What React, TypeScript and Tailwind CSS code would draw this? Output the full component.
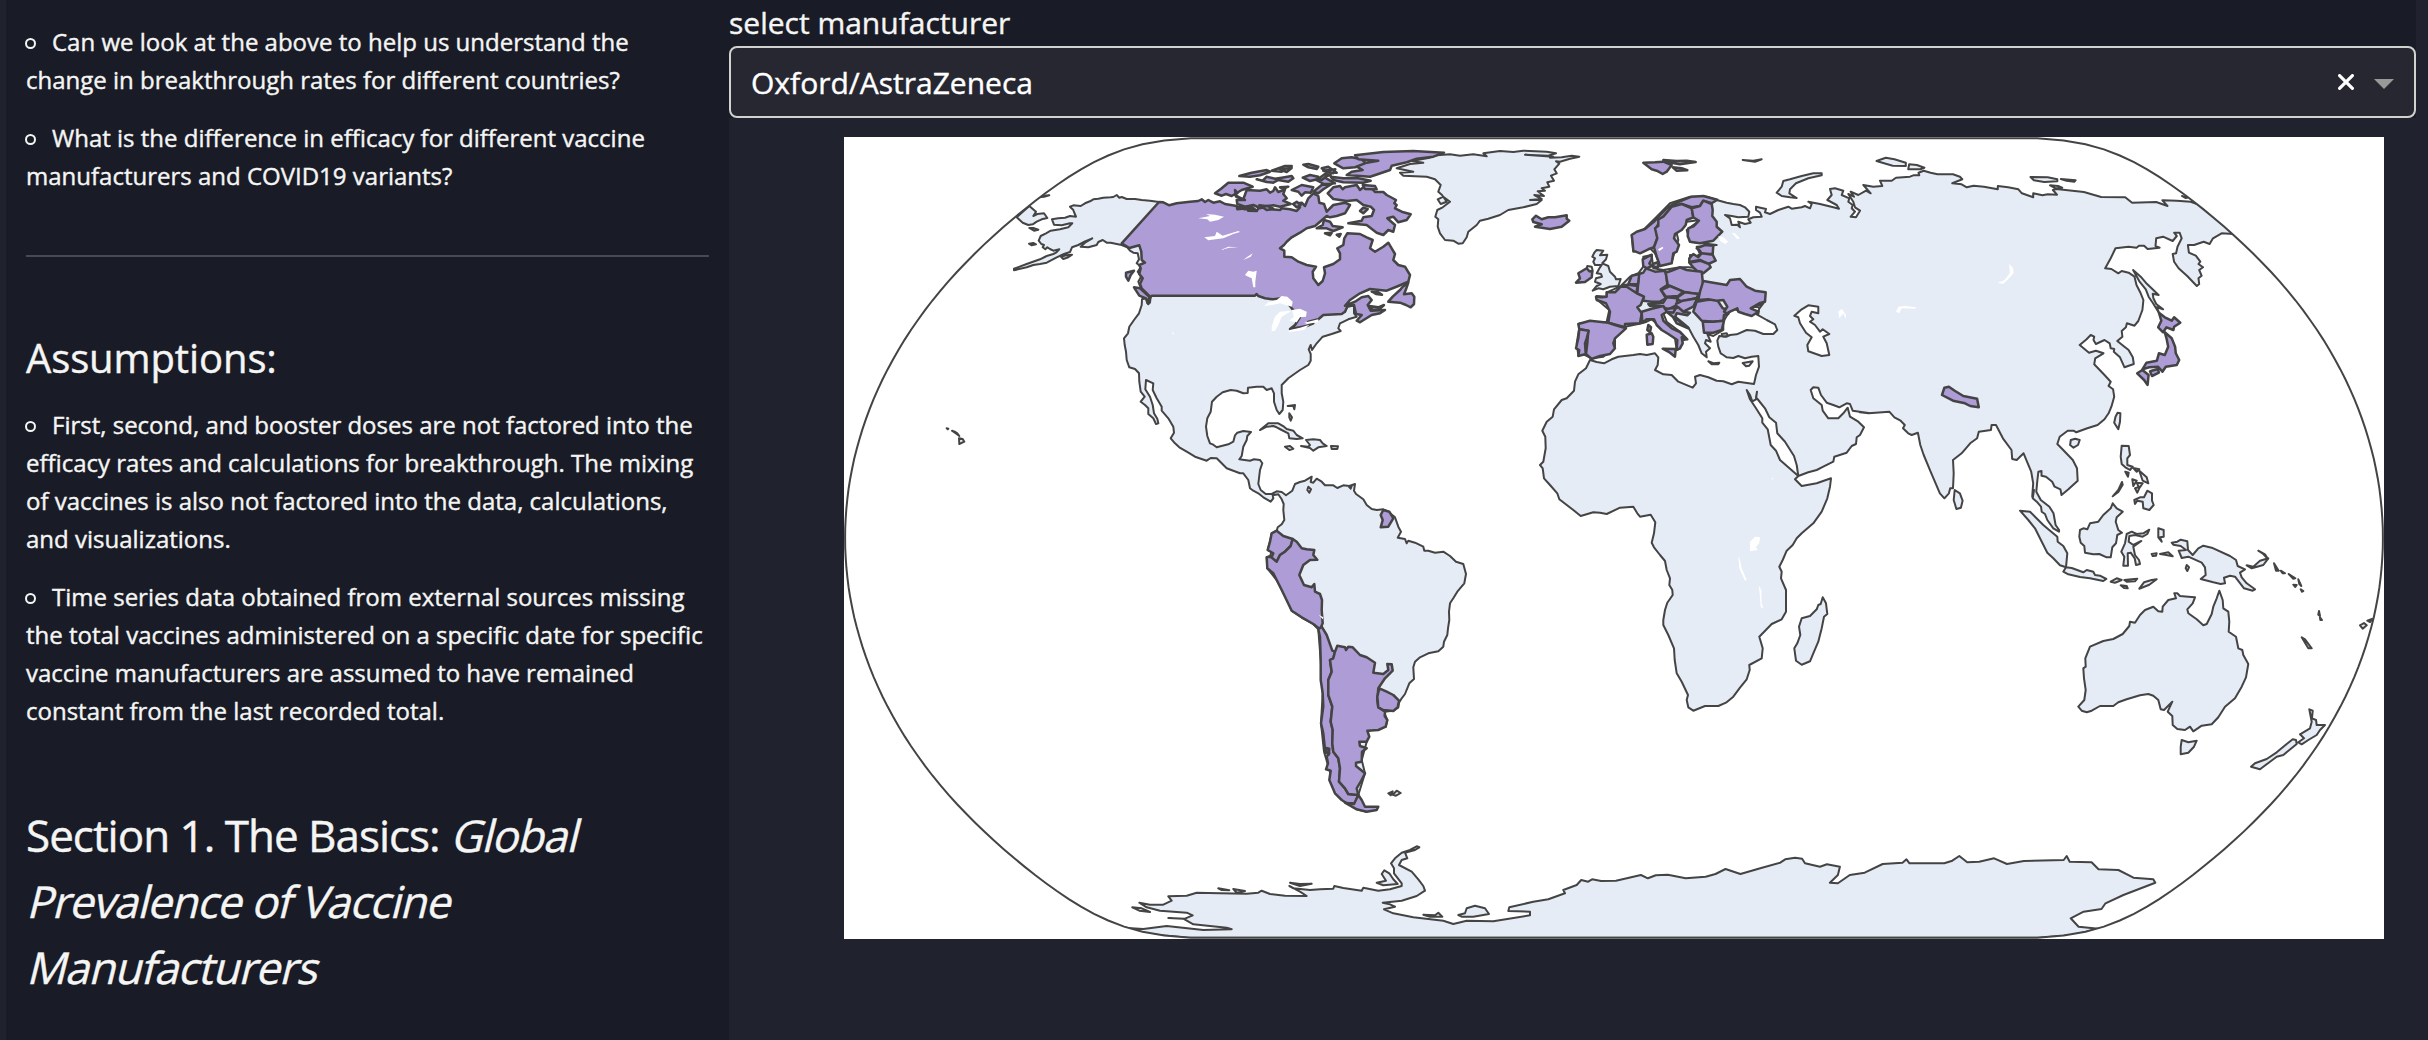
import React from "react";

/* ---------- map geometry ---------- */

// Each sheet holds the coastline points of one region: origin x, origin y, units per px across, units per px down.
const sheets: Record<string, [number, number, number, number]> = {
  A: [840, 130, 3, 3],
  B: [1100, 130, 3, 3],
  C: [1100, 460, 3, 3],
  E: [1500, 130, 3, 3],
  F: [1500, 340, 3, 3],
  G: [1860, 130, 2.9037, 3],
  H: [1940, 440, 3, 3],
  I: [840, 800, 1.00513, 3],
};

// "A:x,y x,y B:x,y ..." -> closed path; a letter switches the sheet.
function shape(src: string): string {
  let s = sheets.A;
  const pts: string[] = [];
  for (let tok of src.trim().split(/\s+/)) {
    if (tok[1] === ":") {
      s = sheets[tok[0]];
      tok = tok.slice(2);
    }
    const [x, y] = tok.split(",").map(Number);
    pts.push(`${(s[0] + x / s[2]).toFixed(1)} ${(s[1] + y / s[3]).toFixed(1)}`);
  }
  return "M" + pts.join("L") + "Z";
}

// Edge of the Natural Earth projection.
function globe(): string {
  const k = 281.1;
  const right: [number, number][] = [];
  for (let i = 0; i <= 90; i++) {
    const p = ((90 - i * 2) * Math.PI) / 180;
    const p2 = p * p;
    const p4 = p2 * p2;
    const x = Math.PI * (0.8707 - 0.131979 * p2 + p4 * (-0.013791 + p4 * (0.003971 * p2 - 0.001529 * p4)));
    const y = p * (1.007226 + p2 * (0.015085 + p4 * (-0.044475 + 0.028874 * p2 - 0.005916 * p4)));
    right.push([x * k, y * k]);
  }
  const all = [
    ...right.map(([x, y]) => [1614 + x, 538 - y]),
    ...right.slice().reverse().map(([x, y]) => [1614 - x, 538 - y]),
  ];
  return "M" + all.map(([x, y]) => `${x.toFixed(1)} ${y.toFixed(1)}`).join("L") + "Z";
}

const land = [
  // Americas
  `A:957,216 930,212 905,210 885,207 860,207 845,201 838,203 830,195 820,201 812,202 790,203 775,206 760,208 750,214 735,220 722,228 700,226 690,230 700,240 702,246 708,260 690,258 675,263 655,265 636,268 642,284 665,286 690,280 697,280 685,292 660,298 632,302 618,310 602,318 596,332 604,342 612,345 608,352 616,358 622,352 630,357 640,362 658,358 648,368 640,372 620,378 600,388 560,402 522,416 522,421 560,412 580,405 600,402 620,398 650,382 672,372 690,366 696,352 715,345 735,334 757,325 735,338 722,350 745,352 770,345 775,336 788,330 800,338 812,338 830,342 845,345 862,352 870,362 880,368 893,370 897,388 890,400 903,410 893,425 903,440 895,455 900,468 930,490 932,500 930,518 922,520 918,505 906,508 905,525 897,550 882,570 868,590 864,610 852,625 854,645 858,665 860,690 868,712 885,717 897,730 898,755 902,785 914,800 902,815 915,825 925,835 925,852 940,865 948,882 955,880 952,866 942,850 938,825 930,800 916,778 918,750 940,760 938,780 950,805 965,830 965,842 985,865 1000,890 1002,908 992,925 1005,940 1018,952 1040,965 1065,980 1100,992 1112,984 1130,985 1145,1000 1160,1015 1180,1022 1200,1030
  C:430,40 445,60 450,85 460,92 475,100 490,112 512,125 520,115 518,106 535,103 545,118 551,132 550,150 553,180 545,193 533,202 530,212 515,220 510,245 503,270 515,275 510,288 500,292 502,325 530,360 565,425 575,452 605,472 640,492 655,508 662,600 668,700 663,790 672,875 690,935 705,1000 770,1048 800,1055 775,1005 795,940 785,900 800,845 805,812 857,800 862,780 852,755 880,752 895,742 897,728 905,715 915,702 928,670 942,657 940,622 945,605 960,592 985,580 1015,574 1030,560 1032,545 1042,525 1044,505 1048,480 1047,455 1050,430 1060,415 1072,395 1093,370 1098,342 1090,312 1068,305 1050,288 1030,275 1005,278 985,272 973,272 970,260 945,248 925,242 920,250 915,237 893,233 903,215 895,200 885,172 865,155 850,148 830,150 815,147 800,135 790,118 768,102 762,92 765,72 748,78 730,76 712,84 700,76 675,76 665,65 650,56 640,68 632,66 635,50 615,62 600,66 585,72 577,92 558,106 545,96 530,94 515,102 497,102 482,90 475,72 480,30
  B:487,1000 480,990 462,988 450,992 418,988 425,978 430,950 440,930 442,918 453,906 430,903 412,908 405,916 400,935 385,943 350,952 340,944 330,940 322,918 318,890 322,865 332,845 336,815 350,800 368,787 392,780 410,782 430,790 443,789 444,773 470,770 490,770 500,780 515,775 522,790 522,815 530,840 538,852 548,840 550,815 545,790 545,765 565,745 600,720 625,705 632,692 632,672 626,658 632,645 636,660 650,640 668,620 695,612 722,603 715,595 720,580 745,568 770,560 762,550 762,527 742,527 735,545 690,535 600,500 460,470 180,470 200,300 177,216`,
  // Greenland
  `B:890,115 930,102 970,98 935,93 985,84 1010,76 1050,73 1080,77 1120,73 1160,79 1150,70 1200,63 1240,66 1270,62 1340,65 1368,70 1345,77 1275,74 1360,80 1350,83 1385,82 1415,77 1438,80 1410,86 1380,95 1368,94 1378,101 1363,118 1370,130 1353,137 1362,152 1342,157 1348,170 1325,175 1335,182 1313,184 1332,198 1303,195 1325,207 1290,210 1325,210 1310,222 1270,232 1225,240 1200,255 1165,266 1140,272 1130,285 1105,305 1100,322 1088,340 1075,341 1060,332 1035,330 1020,310 1013,290 1015,268 1006,260 1012,240 1028,232 1050,215 1030,200 1013,208 1022,222 1040,215 1026,195 1015,185 1022,165 1005,148 980,140 910,137 900,128 940,125`,
  // Eurasia and Africa
  `E:650,210 680,218 700,222 720,225 735,232 748,245 745,260 715,262 695,258 675,255 690,265 695,285 712,284 720,292 715,275 735,282 752,278 745,268 760,262 785,260 780,248 768,240 768,230 798,237 795,247 810,252 835,240 865,230 875,236 905,232 915,228 930,235 935,222 925,215 960,222 1000,232 1017,236 1010,225 982,210 995,195 990,177 1005,175 1030,182 1025,195 1048,205 1045,215 1058,225 1055,235 1065,245 1052,260 1068,262 1080,242 1065,232 1060,215 1045,192 1062,200 1052,185 1075,195 1098,182 1112,190 1090,165 1120,170 1147,168 1140,152 1175,152 1188,143 1230,140 1240,136 1258,136
  G:172,136 170,128 185,122 205,128 225,133 270,133 290,140 297,148 268,160 295,163 310,172 330,167 360,170 400,178 400,168 430,172 460,178 470,190 503,202 503,190 530,196 545,193 572,194 560,180 570,177 650,186 700,201 770,202 790,218 860,216 893,228 878,211 920,212 960,215 985,224 1085,312 1050,310 1025,325 1015,342 998,335 985,340 970,345 952,345 955,368 975,377 988,395 983,402 996,412 985,420 992,437 983,445 985,462 978,468 950,438 925,415 912,395 908,372 918,370 922,350 934,325 928,308 912,308 920,318 908,333 880,320 860,325 858,348 870,353 835,357 825,347 810,347 803,353 780,350 742,355 728,385 712,415 730,417 750,430 760,423 780,428 797,440 803,465 815,490 823,510 820,540 808,573 797,587 775,580 772,592 760,603 762,620 747,633 765,648 780,660 792,682 795,702 768,712 755,682 737,665 738,657 728,655 725,640 710,630 685,642 678,630 680,620 670,615 658,628 638,645 665,668 685,662 707,670 683,685 680,703 710,735 728,755 722,768 735,778 738,800 730,830 722,850 710,868 690,885 660,895 628,907 620,902 603,902 580,920 573,942 590,960 618,990 630,1015 632,1052 605,1078 585,1095 582,1078 565,1070 558,1055 540,1040 527,1037 527,1023 518,1025 515,1050 512,1085 525,1110 550,1130 562,1150 568,1185 578,1200
  H:357,275 340,265 322,240 315,222 305,215 303,200 290,185 278,175 282,150 G:500,1100 503,1060 497,1025 485,995 475,970 455,990 442,987 440,960 415,925 395,885 382,885 380,900 345,905 340,925 320,940 295,970 270,990 272,1030 270,1075 262,1075 258,1090 245,1105 232,1090 205,1025 185,975 175,945 168,908 150,915 140,910 125,895 130,885 118,872 100,862 85,845 25,850 0,847
  F:1110,220 1058,212 1050,192 1040,190 1018,202 1000,195 980,188 963,165 955,143 940,142 932,150 940,175 965,195 968,212 985,235 1015,235 1030,220 1043,203 1050,230 1075,245 1092,262 1080,285 1070,292 1068,312 1055,318 1040,338 1003,350 1000,365 970,380 950,390 925,397 895,408 890,375 882,348 855,305 832,280 828,248 808,232 795,205 775,180 768,172 771,155 768,178 757,184 750,165 740,150 750,178 768,205 787,235 787,248 803,268 812,315 828,332 840,360 865,382 895,408 885,418 905,438 950,430 993,415 990,440 982,475 965,515 940,550 905,580 890,595 878,615 860,632 848,660 838,680 845,695 843,715 858,750 858,815 845,838 815,852 778,890 788,925 785,955 748,975 749,990 740,1018 720,1043 700,1070 678,1088 655,1098 615,1098 580,1112 565,1102 560,1080 564,1065 545,1025 530,1000 524,960 522,925 505,885 490,855 490,840 495,810 502,788 518,765 517,750 508,735 510,715 500,690 495,663 480,645 462,622 455,608 462,580 466,547 452,524 420,530 412,520 400,500 360,503 320,522 300,518 280,517 242,528 220,510 178,478 172,460 150,435 132,415 128,385 120,375 130,365 137,325 136,290 127,272 140,245 158,230 162,208 185,180 200,175 222,152 225,125 235,103 258,85 270,60 290,66 312,70 335,58 355,50 400,45 420,42 440,45 465,40 475,52 473,75 465,90 490,103 515,105 535,125 578,143 588,130 585,110 600,105 625,112 650,122 670,124 695,133 715,125 762,132 768,105 777,80 775,48 755,50 735,55 715,48 700,54 680,52 670,45
  E:662,670 655,650 652,632 658,618 680,620 690,615 710,613 740,600 765,602 790,612 820,612 832,600 825,583 800,570 770,553 775,540 790,520 720,545 700,535 685,550 670,575 670,600 640,618 622,612 632,635 618,630 615,640 630,655 618,665 620,682 605,670 595,645 580,620 565,592 545,575 520,555 500,545 490,550 500,575 540,605 560,628 545,632 540,655 530,660 525,625 480,590 455,568 440,575 425,580 375,590 345,625 345,650 310,680 275,685 255,675 235,675 230,640 240,580 320,575 328,540 290,508 290,498 320,500 320,487 360,470 390,440 415,430 430,410 430,380 455,375 460,415 490,420 540,412 565,412 600,415 570,400 570,375 590,378 600,372 590,350 650,345 570,335 560,300 600,270 560,275 530,310 535,330 515,395 480,405 465,370 450,355 400,365 395,315 430,300 470,260 510,220 570,200 620,200`,
  // Great Britain and Northern Ireland
  `E:283,368 290,360 310,362 300,376 322,374 318,388 307,400 325,408 330,425 345,440 348,448 362,447 355,468 330,470 310,478 295,475 278,482 290,468 302,462 285,455 288,445 306,440 303,432 290,430 300,412 305,405 285,405 280,395 285,385 277,380`,
  `E:262,408 275,410 278,422 268,424 260,416`,
  // Arctic islands
  `E:965,130 940,130 905,138 870,148 850,153 845,170 830,188 845,198 870,202 890,204 868,190 870,178 888,160 925,145 965,136`,
  `E:728,90 760,92 785,88 765,95`, `G:48,93 75,83 100,88 133,98 133,108 95,107 70,100`, `G:143,103 165,105 187,113 175,118 140,118`,
  `G:495,141 545,142 573,148 573,154 535,156 505,151`, `G:583,147 626,151 622,155 600,152`, `G:552,166 575,168 587,173 568,175`, `G:935,198 950,203 945,204`,
  // Chukotka past the date line, Bering islands
  `A:568,228 588,245 580,258 592,252 612,250 622,264 605,268 590,275 578,283 565,285 548,278 530,262`,
  `A:598,202 610,197 628,196 612,200`, `A:568,294 580,294 595,299 582,302`, `A:567,341 580,339 588,343 575,346`, `A:663,380 678,376 696,374 685,382 670,387`,
  // Hawaii
  `A:357,925 368,927 373,935 358,942`, `A:336,902 344,905 352,910 358,918 350,912`, `A:320,895 325,896 323,898`,
  // Caribbean
  `B:480,900 505,880 535,880 552,890 560,897 580,902 590,915 608,925 590,927 568,925 565,910 545,900 530,892 520,888 500,890`,
  `B:603,948 625,950 630,945 618,930 640,928 660,930 668,940 680,948 655,952 640,962 630,954`, `B:555,950 570,948 580,956 568,960`, `B:693,948 714,949 712,957 695,957`,
  `B:563,828 585,825 583,838 580,828`, `B:568,850 576,862 572,872 568,862`,
  `C:625,80 633,88 628,98 622,90`, `C:745,78 755,78 752,86`, `C:865,1000 878,994 872,1006`, `C:878,1004 890,992 902,999 888,1007`,
  // Mediterranean islands
  `E:625,694 640,700 658,698 655,703 635,703`, `E:728,699 758,694 748,707 738,709`, `E:665,612 680,610 684,618 668,620`,
  // Indian Ocean
  `F:968,772 978,790 982,822 972,830 965,865 955,905 940,940 930,964 905,974 888,962 883,925 892,910 901,885 897,860 905,835 930,828 950,808 955,795 962,792`,
  `G:275,1080 290,1090 298,1112 293,1133 280,1137 272,1110`,
  // East Asia islands
  `G:748,848 756,850 755,875 750,898 738,878 742,860`, `G:612,930 625,926 638,930 633,945 620,953 610,945`,
  `G:793,420 815,440 830,458 867,495 850,491 852,505 860,522 880,538 862,532 868,548 850,518 838,500 830,478 812,455`,
  // Philippines
  `H:545,17 566,18 570,45 562,55 562,75 578,80 570,90 556,82 545,72 542,50`, `H:580,84 598,88 590,95`, `H:556,95 566,98 564,110`, `H:577,118 590,122 580,138`, `H:598,92 620,112 625,130 608,122`, `H:590,128 608,130 598,145`, `H:585,145 600,140 592,158`,
  `H:600,172 612,172 622,152 636,160 636,182 641,195 628,210 610,205 608,185 592,182 585,192 583,180`, `H:518,169 535,150 546,126 548,134 535,156`,
  // Indonesia
  `H:240,212 270,215 285,230 310,255 325,268 352,290 353,305 370,318 382,340 378,382 360,376 340,355 322,338 300,295 285,265 265,240`,
  `H:370,395 378,382 395,384 430,397 440,390 460,395 465,405 480,407 499,417 490,423 450,415 420,411 385,403`,
  `H:512,425 530,415 545,420 525,428`, `H:553,420 575,418 592,416 585,424 560,425`, `H:542,436 560,438 563,445 552,444`, `H:598,446 612,427 635,420 650,418 628,434`,
  `H:420,270 430,265 442,268 450,250 475,245 490,225 512,205 518,190 530,205 548,215 530,232 527,245 535,270 546,278 532,285 528,310 517,322 512,352 500,352 478,342 460,343 435,338 433,318 422,308 418,290`,
  `H:628,269 622,282 608,290 585,285 568,288 566,305 580,315 604,303 580,320 585,345 597,360 600,372 588,375 584,355 572,338 563,340 564,377 550,377 553,350 544,335 555,310 560,282 575,275 590,282 610,280`,
  `H:655,265 671,270 671,290 660,292 665,305 655,292`, `H:635,342 650,340 648,347 638,348`, `H:660,342 685,337 698,349 675,344`, `H:740,375 747,382 742,393 737,385`,
  // New Guinea and Melanesia
  `H:695,308 712,305 722,299 742,304 744,330 758,345 775,325 790,317 815,323 870,348 888,360 893,378 915,388 900,398 905,412 920,430 945,448 938,452 912,445 885,410 870,407 852,413 855,430 842,432 820,427 782,417 797,405 795,382 785,368 745,350 725,354 716,332 738,330 722,318 700,314`,
  `H:920,376 940,380 960,362 985,355 970,375 935,385`, `H:955,332 975,343 984,357 970,342`, `H:1002,370 1016,392 1008,392`, `H:1022,392 1035,400 1028,400`, `H:1046,402 1066,415 1060,416`, `H:1075,418 1084,438 1078,432`, `H:1060,434 1070,435 1066,441`, `H:1082,448 1090,453 1086,455`, `H:1137,513 1140,528 1135,524`, `H:1140,532 1146,540 1141,540`, `H:1085,592 1095,598 1115,625 1105,625`, `H:1260,556 1272,549 1280,556 1268,566`, `H:1282,542 1298,536 1290,546`,
  // Australia, Tasmania, New Zealand
  `H:703,460 712,460 720,468 745,470 765,472 758,490 742,508 745,520 770,538 790,556 800,552 815,522 820,500 830,475 838,452 848,480 850,505 865,515 868,545 866,575 888,590 895,625 907,630 910,645 925,672 918,712 905,740 885,775 855,800 835,832 815,853 785,857 760,874 750,860 735,870 712,867 698,855 697,828 683,815 697,785 672,810 662,808 655,780 640,767 625,762 600,766 560,778 535,787 520,798 480,798 455,812 440,817 425,812 415,800 433,780 437,750 432,715 430,685 437,680 436,655 450,620 490,603 520,597 548,582 568,558 570,545 585,548 600,525 615,510 640,500 655,514 667,515 668,500 685,480 708,475`,
  `H:725,900 745,907 770,902 762,920 745,938 722,943 722,920`,
  `H:1108,808 1118,812 1116,835 1128,840 1130,855 1155,855 1140,870 1130,885 1105,900 1085,913 1075,907 1092,895 1080,883 1110,865 1115,845`,
  `H:1058,898 1068,900 1070,912 1030,945 1010,950 990,965 960,988 933,980 945,970 980,957 1010,937 1040,912`,
  // Antarctica
  `C:82,1404 130,1407 200,1398 310,1410 395,1408 380,1403 280,1393 250,1376 205,1374 255,1376 278,1366 260,1358 180,1352 140,1342 118,1328 150,1334 190,1334 215,1322 205,1309 260,1307 290,1298 360,1300 440,1301 475,1298 485,1292 510,1302 555,1307 620,1308 600,1295 568,1278 580,1285 630,1290 660,1288 700,1286 703,1278 730,1284 785,1292 790,1283 835,1292 870,1288 905,1278 905,1270 882,1240 882,1225 873,1210 885,1195 905,1178 930,1170 950,1159 958,1162 945,1170 915,1178 922,1195 905,1200 897,1215 935,1235 955,1258 970,1278 975,1292 950,1308 905,1322 848,1328 870,1333 885,1340 852,1348 880,1360 940,1372 1030,1382 1060,1392 1100,1382 1180,1384 1290,1366 1290,1355 1225,1353 1228,1342 1300,1325 1345,1318 1395,1300 1390,1290 1430,1275
  I:745,240 752,245 756,238 765,243 780,242 805,225 812,235 820,226 832,224 850,235 870,230 880,222 890,207 905,222 925,205 945,188 950,178 960,173 967,176 970,190 985,200 992,193 1005,200 1003,225 995,248 1003,250 1015,225 1030,218 1048,192 1068,188 1072,178 1075,190 1110,190 1118,182 1125,168 1133,187 1145,185 1160,175 1173,192 1190,183 1230,180 1233,168 1236,185 1258,187 1265,208 1285,210 1300,233 1320,238 1322,248 1290,285 1272,310 1268,327 1250,335 1237,355 1245,380 1265,386 1240,405 1205,413 350,413 310,402 285,382`,
  `C:97,1342 125,1345 150,1356 118,1352`, `C:355,1285 388,1291 365,1290`, `C:400,1287 435,1293 410,1298`, `C:570,1268 600,1272 635,1271 600,1278`,
  `C:830,1268 858,1262 845,1242 853,1231 868,1240 880,1258 893,1272 850,1276`, `C:1075,1365 1095,1360 1100,1345 1125,1337 1155,1345 1167,1362 1120,1370 1085,1370`, `C:970,1364 1005,1366 1015,1358 1027,1370 990,1370`,
];

const seas = [
  `E:883,557 905,538 925,526 955,530 955,550 935,545 930,558 940,568 930,575 945,585 960,605 968,598 988,612 970,620 980,640 988,675 965,678 925,664 922,645 935,622 918,608 900,580 895,562`,
  `E:722,545 745,540 755,530 778,532 775,552 755,547 735,552`,
];

const sold = [
  // Canada
  `B:177,216 190,217 208,226 230,220 270,215 295,213 305,208 315,216 325,210 340,218 360,214 375,222 410,228 412,238 440,235 445,242 470,243 475,235 500,232 510,238 540,240 545,235 570,238 590,243 600,232 580,222 605,218 615,228 625,205 640,190 655,198 658,218 672,222 680,245 700,225 735,218 750,225 735,250 710,258 690,262 680,258 660,275 645,288 620,295 600,308 575,322 560,335 552,345 540,355 553,362 553,380 575,382 595,395 620,405 648,410 638,425 640,445 655,465 668,453 675,430 672,412 700,402 720,388 720,370 712,355 730,345 733,325 742,310 780,312 800,322 818,330 810,355 825,365 850,350 865,338 875,355 885,372 880,390 895,405 915,410 930,435 925,455 895,468 860,482 810,477 780,490 750,510 735,527 765,515 785,502 805,498 815,510 803,525 812,542 855,540 840,550 815,555 780,577 770,572 785,555 768,552 762,525 742,530 735,545 725,552 670,555 655,568 625,575 640,580 620,588 600,592 570,597 585,585 600,562 575,535 560,515 545,505 520,508 495,505 475,498 470,492 465,497 155,497 145,510 148,498 125,475 120,462 128,445 118,432 122,415 118,405 135,398 125,390 124,365 118,346 88,354 65,340`,
  `B:808,528 818,540 838,538 852,525 835,532`, `B:815,485 835,487 846,494 828,492`,
  `B:925,458 908,470 900,480 878,500 865,515 900,518 918,525 932,532 942,522 943,500 935,490 912,493 918,478`,
  `B:102,472 120,475 148,500 145,522 138,505 118,497`, `B:78,428 102,422 92,435 85,452 78,440`,
  `B:345,190 365,175 385,158 430,158 458,170 425,180 395,198 378,192 365,197`,
  `B:405,180 412,190 405,195 430,208 440,180 480,182 500,178 510,188 520,183 525,172 535,186 555,178 550,192 560,205 550,212 572,222 540,230 520,226 500,228 480,234 460,225 435,230 412,222 410,210 435,210 408,200`,
  `B:418,138 455,128 500,120 510,125 480,136 450,140`, `B:470,148 488,152 500,140 525,146 545,143 575,138 580,145 565,155 535,150 520,158 500,156`, `B:515,122 555,108 575,108 570,115 545,125`, `B:540,118 575,114 560,126`,
  `B:610,104 625,102 655,110 650,117 625,112`, `B:608,143 630,135 655,140 652,148 630,153`, `B:575,180 605,165 640,172 632,188 615,187 605,197 595,185`, `B:640,185 665,165 695,162 670,178 655,190`, `B:648,150 675,143 705,160 672,162`, `B:665,115 685,110 710,128 680,127`, `B:540,172 565,170 550,177`,
  `B:655,146 665,150 680,138 692,135 675,132`, `B:670,122 690,120 706,118 700,130`, `B:580,222 590,215 602,225 590,232`, `B:478,226 500,240 520,236 505,229`, `B:415,232 435,238 450,236 470,242 455,230`,
  `B:703,100 725,85 755,82 785,88 800,102 765,112 730,115`,
  `B:765,76 850,66 940,63 1032,68 1000,80 950,86 920,97 875,107 870,120 835,132 810,140 740,135 755,125 788,120 770,110 800,98 835,92 775,88`,
  `B:692,140 730,145 775,145 812,152 790,158 730,157 700,150`,
  `B:683,190 700,172 720,168 728,178 735,172 770,165 780,180 790,172 815,175 825,186 850,186 860,195 888,210 883,220 890,225 885,235 905,245 932,253 920,270 895,277 880,260 862,265 885,285 880,305 865,300 850,315 830,308 800,285 745,280 785,272 790,262 815,258 822,240 812,230 790,225 770,210 740,213 700,207`,
  `B:788,165 825,168 830,178 795,177`, `B:650,295 668,285 672,270 690,275 698,288 728,292 700,303 680,295`, `B:780,243 790,233 803,237 790,250`, `B:675,310 695,308 690,316`, `B:710,314 722,312 718,320`,
  // South America
  `C:530,212 550,228 578,237 572,258 555,275 540,285 530,305 512,298 520,280 503,270 510,245 515,220`,
  `C:578,237 590,245 605,265 620,268 643,270 640,285 652,299 630,300 610,315 598,345 612,375 635,382 643,372 645,395 660,402 666,420 665,450 668,490 660,508 640,492 605,472 575,452 545,390 520,340 502,325 500,292 512,290 530,305 540,285 555,275 572,258`,
  `C:655,508 665,500 680,525 697,572 705,575 700,595 690,600 695,635 685,660 685,705 697,740 692,785 698,810 697,850 700,875 715,895 720,925 717,965 735,985 745,1002 775,1005 765,1030 740,1030 725,1020 705,1000 688,960 692,932 678,928 684,910 680,890 688,880 676,878 670,820 663,790 670,740 668,700 662,660 662,600 660,530`,
  `C:705,575 712,557 735,562 738,570 745,560 758,562 780,585 800,592 825,608 820,638 850,642 865,630 862,612 875,613 878,632 855,655 835,685 832,720 835,742 855,755 854,768 862,780 857,800 835,810 802,812 808,830 800,845 778,845 780,858 800,865 786,875 785,905 768,908 768,918 795,940 782,965 770,985 775,1005 745,1002 735,985 717,965 720,925 715,895 700,875 697,850 698,810 692,785 697,740 685,705 685,660 695,635 690,600 700,595`,
  `C:838,685 860,695 880,705 897,722 893,742 880,753 850,750 835,742 832,710`,
  `C:850,150 868,155 880,175 865,200 842,202 848,180 842,165`,
  `C:775,1005 785,1020 795,1040 812,1040 835,1040 830,1050 800,1055 770,1048 735,1028 762,1032`, `C:678,864 688,866 686,884 680,878`,
  // Iceland, Svalbard, Ireland
  `B:1297,268 1308,257 1325,268 1345,262 1365,262 1400,256 1400,266 1408,272 1385,290 1350,297 1305,290 1325,283 1300,276`,
  `E:430,98 465,97 490,95 515,105 500,125 488,132 470,122 455,118`, `E:490,90 530,93 560,92 587,96 540,103 505,97`, `E:518,112 545,115 562,121 530,122`,
  `E:228,458 240,445 235,430 260,415 268,424 277,425 275,442 255,456`,
  // Nordics and Baltics
  `E:395,315 410,305 435,297 465,272 480,255 500,235 520,222 545,212 575,200 610,198 652,209 635,220 610,212 600,228 575,232 545,222 515,230 490,260 470,290 472,325 462,352 445,358 420,370 400,362 398,340`,
  `E:515,230 545,222 575,235 580,262 560,270 557,285 545,300 525,312 522,325 537,345 530,365 520,370 515,400 480,408 470,380 462,352 472,325 465,295 475,288 475,268 490,260`,
  `E:575,235 600,228 610,212 635,222 638,240 637,258 650,275 650,290 667,305 640,332 600,340 570,335 563,318 565,295 582,288 597,272 580,262`,
  `E:590,355 615,345 640,347 638,372 605,372 600,362`, `E:568,385 580,372 595,382 605,370 638,374 647,392 625,402 600,390 568,396`, `E:568,398 600,392 627,402 632,412 610,430 590,422 580,412`,
  `E:428,388 455,374 455,388 448,400 455,408 440,415 430,408`, `E:458,402 475,396 474,412 462,412`,
  // Central Europe
  `E:415,432 430,428 438,415 465,425 495,422 500,440 502,465 482,478 498,505 480,515 455,515 430,512 430,500 412,490 415,455`,
  `E:388,455 395,437 418,432 414,462 385,463`, `E:368,466 385,464 412,468 410,488 385,480`,
  `E:497,428 520,420 540,412 560,420 605,425 610,470 598,492 575,490 550,485 515,470 503,465`,
  `E:483,480 510,468 550,485 535,498 498,500`, `E:445,522 490,518 500,502 532,505 530,525 505,538 480,528 450,528`, `E:535,500 555,487 595,492 590,504 545,514 532,508`, `E:528,522 548,512 592,505 580,530 550,545 532,536`,
  `E:288,500 305,502 320,500 320,487 345,487 362,470 380,470 410,490 432,500 422,525 412,532 425,550 420,580 375,582 375,592 325,578 330,545 318,520 290,510`,
  `E:235,582 270,572 325,578 345,585 378,595 345,625 340,640 345,655 330,672 300,678 275,687 258,672 262,640 265,602 238,598`,
  `E:238,598 266,602 260,625 255,640 257,672 235,678 238,660 228,655 235,625`,
  `E:425,545 455,536 490,528 500,545 485,555 490,572 515,595 540,606 562,628 545,622 548,640 540,655 530,660 532,630 505,612 485,600 470,585 462,568 440,568 427,578`,
  `E:488,656 527,657 525,680 510,668`, `E:440,614 455,610 460,620 458,642 442,644`, `E:445,585 453,592 450,607 442,600`,
  `E:500,545 520,537 535,532 550,545 570,548 562,556 530,550 525,562 545,580 565,595 530,580 518,560`, `E:498,537 528,533 520,548 500,545`,
  `E:590,515 620,510 650,508 668,535 688,540 685,552 672,555 670,572 640,575 605,572 580,545`,
  `E:608,575 640,575 672,572 665,600 640,608 612,608`,
  `E:610,453 640,458 680,465 690,450 720,447 740,470 765,482 797,487 795,515 778,520 752,535 775,545 755,558 735,552 715,545 712,535 690,545 680,550 672,545 682,530 670,510 650,512 625,508 595,510 600,485`,
  // Nepal, Japan
  `G:238,795 245,773 258,770 275,782 300,798 340,806 345,832 320,828 305,820 270,812`,
  `G:868,548 885,562 905,572 912,562 930,578 912,590 910,600 890,592 880,607 866,592 875,572`,
  `G:885,607 905,625 915,650 917,670 927,690 920,705 888,710 878,725 865,710 840,712 820,718 832,698 862,692 868,670 885,675 895,650 890,625`,
  `G:805,730 820,720 838,735 835,765 825,750`, `G:842,724 865,717 868,728 848,738`,
];

const lakes = [
  `B:295,265 330,258 318,252 345,254 372,260 355,270 330,275 322,268`, `B:313,322 345,318 350,305 368,317 415,303 420,306 400,312 370,325 325,331`, `B:362,360 385,350 415,352 388,353`, `B:430,390 440,382 458,370 452,380`, `B:435,435 445,422 460,425 470,422 466,455 466,472 460,472 455,445 440,438`,
  `B:492,528 505,517 530,510 545,498 562,500 578,515 575,530 540,520 520,524`, `B:515,604 515,590 525,560 540,545 575,542 545,560 535,585 525,602`, `B:575,540 600,536 620,545 618,560 600,562 590,577 568,572 582,560`, `B:565,607 570,600 600,593 628,584 612,600`, `B:613,578 655,568 655,576 622,582`, `B:215,606 222,610 220,615`,
  `F:750,605 765,590 780,592 778,608 768,622 773,630 750,634`, `F:715,648 720,660 725,685 740,720 735,722 718,685`, `F:776,736 784,750 785,790 790,805 782,802 780,770`, `F:814,414 820,415 818,420`,
  `E:655,318 670,322 685,335 675,342 660,332`, `E:695,308 705,310 720,325 712,328`, `E:474,358 488,350 490,355 478,363`, `E:1018,565 1015,545 1025,536 1038,555 1037,567 1030,550`, `E:1188,545 1195,530 1215,528 1247,532 1247,536 1205,535 1198,550`,
  `G:400,458 420,450 435,430 433,402 445,415 446,430 430,448 415,462`, `C:656,464 670,472 668,478`,
];

function WorldMap() {
  const edge = globe();
  return (
    <svg viewBox="844 137 1540 802" className="ml-[115px] mt-[19px] block h-[802px] w-[1540px] bg-white">
      <defs>
        <clipPath id="globe">
          <path d={edge} />
        </clipPath>
      </defs>
      <g clipPath="url(#globe)" stroke="#444444" strokeWidth={2} strokeLinejoin="round">
        <path d={land.map(shape).join("")} fill="#e5ecf6" />
        <path d={seas.map(shape).join("")} fill="#ffffff" />
        {sold.map((s, i) => (
          <path key={i} d={shape(s)} fill="#ae9cd6" strokeWidth={2.5} />
        ))}
        <path d={lakes.map(shape).join("")} fill="#ffffff" stroke="none" />
      </g>
      <path d={edge} fill="none" stroke="#444444" strokeWidth={2} />
    </svg>
  );
}

/* ---------- sidebar ---------- */

function Item({ lines }: { lines: string[] }) {
  return (
    <li className="text-[24px] leading-[38px]">
      {lines.map((l, i) => (
        <div key={l} className="flex items-center whitespace-nowrap">
          {i === 0 && <span className="-ml-px mr-[16px] mt-[2px] size-[11px] rounded-full border-2 border-[#f5f5f3]" />}
          <span>{l}</span>
        </div>
      ))}
    </li>
  );
}

// Slanted roman letters, leaning from the baseline.
function Oblique({ children }: { children: React.ReactNode }) {
  return <em className="inline-block origin-[0_76%] -skew-x-[14deg] not-italic">{children}</em>;
}

function Sidebar() {
  return (
    <aside className="ml-[6px] h-[1040px] w-[723px] shrink-0 bg-[#191c27] pl-[20px] pr-[20px] pt-[23px]">
      <ul className="flex flex-col gap-[20px]">
        <Item lines={["Can we look at the above to help us understand the", "change in breakthrough rates for different countries?"]} />
        <Item lines={["What is the difference in efficacy for different vaccine", "manufacturers and COVID19 variants?"]} />
      </ul>
      <hr className="mt-[60px] h-[2px] border-0 bg-[#474a53]" />
      <h4 className="mt-[74px] h-[53px] whitespace-nowrap text-[40px] leading-[53px] tracking-[-0.1px]">Assumptions:</h4>
      <ul className="mt-[22px] flex flex-col gap-[20px]">
        <Item
          lines={[
            "First, second, and booster doses are not factored into the",
            "efficacy rates and calculations for breakthrough. The mixing",
            "of vaccines is also not factored into the data, calculations,",
            "and visualizations.",
          ]}
        />
        <Item
          lines={[
            "Time series data obtained from external sources missing",
            "the total vaccines administered on a specific date for specific",
            "vaccine manufacturers are assumed to have remained",
            "constant from the last recorded total.",
          ]}
        />
      </ul>
      <h3 className="mt-[72px] whitespace-nowrap text-[44px] leading-[66px] tracking-[-1px]">
        Section 1. The Basics: <Oblique>Global</Oblique>
        <br />
        <Oblique>Prevalence of Vaccine</Oblique>
        <br />
        <Oblique>Manufacturers</Oblique>
      </h3>
    </aside>
  );
}

/* ---------- page ---------- */

export default function App() {
  return (
    <div className="flex h-[1040px] w-[2428px] overflow-hidden bg-[#20222e] font-['Open_Sans','Noto_Sans',sans-serif] text-[#f5f5f3] [-webkit-text-stroke:0.4px]">
      <Sidebar />
      <main className="w-[1699px]">
        <div className="w-[1687px] bg-[#191c27]">
          <label className="block h-[46px] whitespace-nowrap text-[30px] leading-[46px]">select manufacturer</label>
          <div className="flex h-[72px] items-center rounded-[8px] border-2 border-[#cfd2cf] bg-[#262731] pl-[20px] pr-[20px] text-[30px] text-white">
            <span className="flex-1 whitespace-nowrap">Oxford/AstraZeneca</span>
            <svg viewBox="0 0 16 16" className="mr-[20px] size-[16px]" stroke="#ffffff" strokeWidth="3.2" strokeLinecap="round">
              <path d="M1.6 1.6L14.4 14.4M14.4 1.6L1.6 14.4" />
            </svg>
            <svg viewBox="0 0 20 10" className="mt-[3px] h-[10px] w-[20px]" fill="#999999">
              <path d="M0 0H20L10 10Z" />
            </svg>
          </div>
        </div>
        <WorldMap />
      </main>
    </div>
  );
}
